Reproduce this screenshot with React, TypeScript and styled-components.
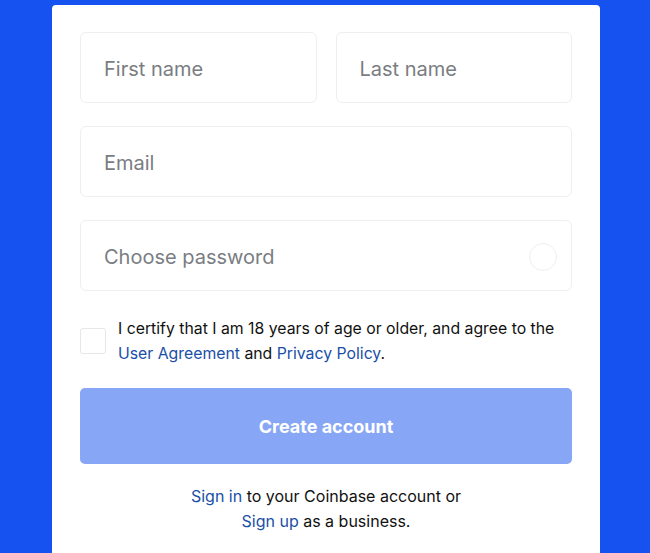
import React from 'react';
import styled, { createGlobalStyle } from 'styled-components';

const GlobalStyle = createGlobalStyle`
    html, body {
        margin: 0;
        padding: 0;
        background: #1652f0;
        font-family: Inter, Roboto, "Liberation Sans", sans-serif;
    }
`;

const Page = styled.div`
    width: 650px;
    height: 553px;
    overflow: hidden;
    padding: 5px 50px 0 52px;
    box-sizing: border-box;
`;

const Card = styled.div`
    background: #fff;
    border-radius: 4px 4px 0 0;
    padding: 27px 28px 40px;
    height: 600px;
    box-sizing: border-box;
`;

const Row = styled.div`
    display: flex;
    gap: 19px;
    margin-bottom: 23px;
`;

const Field = styled.div`
    flex: 1;
    height: 71px;
    border: 1px solid #eeeff1;
    border-radius: 6px;
    display: flex;
    align-items: center;
    padding: 2px 24px 0 23px;
    box-sizing: border-box;
    font-size: 20px;
    color: #7a7d82;
`;

const Label = styled.span`
    flex: 1;
`;

const Spinner = styled.span`
    width: 26px;
    height: 26px;
    border: 1px solid #eeeff1;
    border-radius: 50%;
    margin-right: -10px;
`;

const Agree = styled.div`
    display: flex;
    align-items: center;
    gap: 12px;
    margin-top: 25px;
    font-size: 15.8px;
    line-height: 25px;
    color: #111;
`;

const Box = styled.span`
    width: 26px;
    height: 26px;
    border: 1px solid #e6e7ea;
    border-radius: 3px;
    flex: none;
    box-sizing: border-box;
`;

const A = styled.a`
    color: #1a4fa8;
    text-decoration: none;
`;

const Button = styled.div`
    margin-top: 22px;
    height: 76px;
    border-radius: 5px;
    background: #88a6f6;
    color: #fff;
    font-weight: 700;
    font-size: 18px;
    display: flex;
    align-items: center;
    justify-content: center;
`;

const Footer = styled.div`
    margin-top: 20px;
    text-align: center;
    font-size: 16px;
    line-height: 25px;
    color: #111;
`;

export default function App() {
    return (
        <>
            <GlobalStyle />
            <Page>
                <Card>
                    <Row>
                        <Field>First name</Field>
                        <Field>Last name</Field>
                    </Row>
                    <Row>
                        <Field>Email</Field>
                    </Row>
                    <Row>
                        <Field>
                            <Label>Choose password</Label>
                            <Spinner />
                        </Field>
                    </Row>
                    <Agree>
                        <Box />
                        <div>
                            I certify that I am 18 years of age or older, and agree to the
                            <br />
                            <A href="#">User Agreement</A> and <A href="#">Privacy Policy</A>.
                        </div>
                    </Agree>
                    <Button>Create account</Button>
                    <Footer>
                        <A href="#">Sign in</A> to your Coinbase account or
                        <br />
                        <A href="#">Sign up</A> as a business.
                    </Footer>
                </Card>
            </Page>
        </>
    );
}
